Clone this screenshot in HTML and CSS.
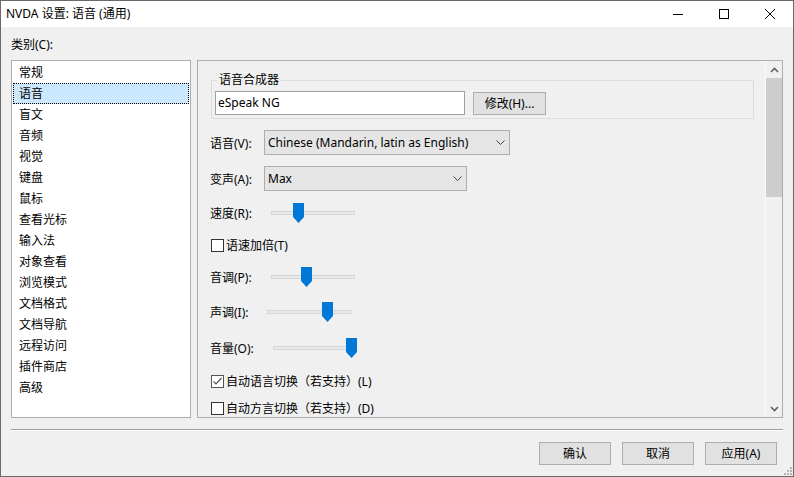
FILE: index.html
```html
<!DOCTYPE html>
<html lang="zh-CN">

<head>
    <meta charset="UTF-8">
    <title>NVDA 设置: 语音 (通用)</title>
    <link rel="stylesheet" href="styles.css">
</head>

<body>
    <div class="window">
        <div class="titlebar">
            <div class="title">NVDA 设置: 语音 (通用)</div>
            <div class="caption-btn">
                <svg width="10" height="10" viewBox="0 0 10 10"><line x1="0" y1="5.5" x2="10" y2="5.5" stroke="#000" stroke-width="1"/></svg>
            </div>
            <div class="caption-btn">
                <svg width="10" height="10" viewBox="0 0 10 10"><rect x="0.5" y="0.5" width="9" height="9" fill="none" stroke="#000" stroke-width="1"/></svg>
            </div>
            <div class="caption-btn">
                <svg width="10" height="10" viewBox="0 0 10 10"><path d="M0 0 L10 10 M10 0 L0 10" stroke="#000" stroke-width="1"/></svg>
            </div>
        </div>

        <div class="content">
            <div class="cat-label">类别(C):</div>

            <div class="main">
                <ul class="categories">
                    <li>常规</li>
                    <li class="selected">语音</li>
                    <li>盲文</li>
                    <li>音频</li>
                    <li>视觉</li>
                    <li>键盘</li>
                    <li>鼠标</li>
                    <li>查看光标</li>
                    <li>输入法</li>
                    <li>对象查看</li>
                    <li>浏览模式</li>
                    <li>文档格式</li>
                    <li>文档导航</li>
                    <li>远程访问</li>
                    <li>插件商店</li>
                    <li>高级</li>
                </ul>

                <div class="panel">
                    <div class="panel-body">
                        <fieldset class="group">
                            <legend>语音合成器</legend>
                            <div class="synth-row">
                                <div class="edit">eSpeak NG</div>
                                <div class="button">修改(H)...</div>
                            </div>
                        </fieldset>

                        <div class="row row-combo1">
                            <span class="label fixed">语音(V):</span>
                            <div class="combo wide">
                                <span>Chinese (Mandarin, latin as English)</span>
                                <svg width="9" height="5" viewBox="0 0 9 5"><polyline points="0.5,0.5 4.5,4.5 8.5,0.5" fill="none" stroke="#444" stroke-width="1"/></svg>
                            </div>
                        </div>

                        <div class="row row-combo2">
                            <span class="label fixed">变声(A):</span>
                            <div class="combo narrow">
                                <span>Max</span>
                                <svg width="9" height="5" viewBox="0 0 9 5"><polyline points="0.5,0.5 4.5,4.5 8.5,0.5" fill="none" stroke="#444" stroke-width="1"/></svg>
                            </div>
                        </div>

                        <div class="row row-rate">
                            <span class="label">速度(R):</span>
                            <div class="slider">
                                <div class="track"></div>
                                <svg class="thumb" style="left: 22px" width="11" height="20" viewBox="0 0 11 20"><polygon points="0,0 11,0 11,14 5.5,20 0,14" fill="#0078d7"/></svg>
                            </div>
                        </div>

                        <div class="row row-cb1">
                            <span class="checkbox"></span>
                            <span class="label">语速加倍(T)</span>
                        </div>

                        <div class="row row-pitch">
                            <span class="label">音调(P):</span>
                            <div class="slider">
                                <div class="track"></div>
                                <svg class="thumb" style="left: 30px" width="11" height="20" viewBox="0 0 11 20"><polygon points="0,0 11,0 11,14 5.5,20 0,14" fill="#0078d7"/></svg>
                            </div>
                        </div>

                        <div class="row row-inflection">
                            <span class="label">声调(I):</span>
                            <div class="slider">
                                <div class="track"></div>
                                <svg class="thumb" style="left: 55px" width="11" height="20" viewBox="0 0 11 20"><polygon points="0,0 11,0 11,14 5.5,20 0,14" fill="#0078d7"/></svg>
                            </div>
                        </div>

                        <div class="row row-volume">
                            <span class="label">音量(O):</span>
                            <div class="slider">
                                <div class="track"></div>
                                <svg class="thumb" style="left: 73px" width="11" height="20" viewBox="0 0 11 20"><polygon points="0,0 11,0 11,14 5.5,20 0,14" fill="#0078d7"/></svg>
                            </div>
                        </div>

                        <div class="row row-cb2">
                            <span class="checkbox checked">
                                <svg width="11" height="11" viewBox="0 0 11 11"><polyline points="1.5,5.5 4,8 9.5,2" fill="none" stroke="#555" stroke-width="1.2"/></svg>
                            </span>
                            <span class="label">自动语言切换（若支持）(L)</span>
                        </div>

                        <div class="row row-cb3">
                            <span class="checkbox"></span>
                            <span class="label">自动方言切换（若支持）(D)</span>
                        </div>
                    </div>

                    <div class="scrollbar">
                        <div class="arrow">
                            <svg width="9" height="6" viewBox="0 0 9 6"><polyline points="1,5 4.5,1.5 8,5" fill="none" stroke="#606060" stroke-width="1.6"/></svg>
                        </div>
                        <div class="scroll-thumb"></div>
                        <div class="scroll-track"></div>
                        <div class="arrow">
                            <svg width="9" height="6" viewBox="0 0 9 6"><polyline points="1,1 4.5,4.5 8,1" fill="none" stroke="#606060" stroke-width="1.6"/></svg>
                        </div>
                    </div>
                </div>
            </div>

            <div class="separator"></div>

            <div class="buttons">
                <div class="button">确认</div>
                <div class="button">取消</div>
                <div class="button">应用(A)</div>
            </div>

            <svg class="grip" width="8" height="8" viewBox="0 0 8 8">
                <rect x="6" y="0" width="2" height="2" fill="#b4b4b4"/>
                <rect x="3" y="3" width="2" height="2" fill="#b4b4b4"/>
                <rect x="6" y="3" width="2" height="2" fill="#b4b4b4"/>
                <rect x="0" y="6" width="2" height="2" fill="#b4b4b4"/>
                <rect x="3" y="6" width="2" height="2" fill="#b4b4b4"/>
                <rect x="6" y="6" width="2" height="2" fill="#b4b4b4"/>
            </svg>
        </div>
    </div>
</body>

</html>
```

FILE: styles.css
```css
* {
    box-sizing: border-box;
}

body {
    margin: 0;
    background: #f0f0f0;
    font-family: "Segoe UI", "Noto Sans", "Noto Sans CJK SC", sans-serif;
    font-size: 12px;
    color: #000;
}

.window {
    width: 794px;
    height: 477px;
    border: 1px solid #6a6a6a;
    background: #f0f0f0;
    overflow: hidden;
}

.titlebar {
    height: 26px;
    background: #fff;
    display: flex;
    align-items: center;
}

.title {
    flex: 1;
    padding-left: 5px;
    line-height: 26px;
}

.caption-btn {
    width: 46px;
    height: 26px;
    display: flex;
    align-items: center;
    justify-content: center;
}

.caption-btn svg {
    display: block;
}

.content {
    position: relative;
    height: 449px;
    padding: 10px 10px 0 10px;
}

.cat-label {
    line-height: 16px;
    height: 16px;
}

.main {
    margin-top: 7px;
    height: 358px;
    display: flex;
    gap: 6px;
}

.categories {
    width: 180px;
    margin: 0;
    padding: 1px 0 0 0;
    list-style: none;
    background: #fff;
    border: 1px solid #adadad;
}

.categories li {
    height: 21px;
    line-height: 21px;
    margin: 0 1px;
    padding-left: 6px;
}

.categories li.selected {
    background: #cce8ff;
    outline: 1px dotted #000;
    outline-offset: -1px;
}

.panel {
    flex: 1;
    display: flex;
    border: 1px solid #adadad;
    overflow: hidden;
}

.panel-body {
    flex: 1;
    padding-left: 12px;
    overflow: hidden;
}

.group {
    margin: 11px 0 0 1px;
    width: 543px;
    padding: 3px 3px 3px 3px;
    border: 1px solid #dcdcdc;
}

.group legend {
    margin-left: 2px;
    padding: 0 2px;
    line-height: 16px;
}

.synth-row {
    display: flex;
    align-items: center;
    gap: 8px;
}

.edit {
    width: 250px;
    height: 24px;
    line-height: 22px;
    padding-left: 2px;
    background: #fff;
    border: 1px solid #a0a0a0;
}

.button {
    width: 72px;
    height: 23px;
    line-height: 21px;
    text-align: center;
    background: #e1e1e1;
    border: 1px solid #adadad;
}

.synth-row .button {
    width: 73px;
}

.row {
    display: flex;
    align-items: center;
}

.label {
    white-space: nowrap;
}

.label.fixed {
    width: 54px;
}

.row-combo1 { margin-top: 11px; height: 25px; }
.row-combo2 { margin-top: 11px; height: 25px; }
.row-rate { margin-top: 12px; height: 20px; }
.row-cb1 { margin-top: 13px; height: 18px; }
.row-pitch { margin-top: 13px; height: 20px; }
.row-inflection { margin-top: 15px; height: 20px; }
.row-volume { margin-top: 16px; height: 20px; }
.row-cb2 { margin-top: 14px; height: 18px; }
.row-cb3 { margin-top: 9px; height: 18px; }

.combo {
    height: 25px;
    display: flex;
    align-items: center;
    justify-content: space-between;
    padding: 0 4px 0 3px;
    background: #e5e5e5;
    border: 1px solid #adadad;
}

.combo svg {
    display: block;
}

.combo.wide {
    width: 246px;
}

.combo.narrow {
    width: 203px;
}

.slider {
    position: relative;
    width: 84px;
    height: 20px;
    margin-left: 19px;
}

.track {
    margin-top: 8px;
    height: 4px;
    background: #e7eaea;
    border: 1px solid #d6d6d6;
}

.thumb {
    position: absolute;
    top: 0;
    display: block;
}

.checkbox {
    width: 13px;
    height: 13px;
    margin-left: 1px;
    margin-right: 2px;
    background: #fff;
    border: 1px solid #333;
    display: flex;
    align-items: center;
    justify-content: center;
}

.checkbox.checked {
    border-color: #555;
}

.checkbox svg {
    display: block;
}

.scrollbar {
    width: 17px;
    display: flex;
    flex-direction: column;
    background: #f0f0f0;
    border-left: 1px solid #fafafa;
}

.arrow {
    height: 17px;
    display: flex;
    align-items: center;
    justify-content: center;
}

.arrow svg {
    display: block;
}

.scroll-thumb {
    height: 119px;
    background: #cdcdcd;
}

.scroll-track {
    flex: 1;
}

.separator {
    margin-top: 11px;
    height: 2px;
    border-top: 1px solid #a0a0a0;
    border-bottom: 1px solid #fff;
}

.buttons {
    margin-top: 11px;
    margin-right: 6px;
    display: flex;
    justify-content: flex-end;
    gap: 11px;
}

.grip {
    position: absolute;
    right: 1px;
    bottom: 1px;
    display: block;
}
```
